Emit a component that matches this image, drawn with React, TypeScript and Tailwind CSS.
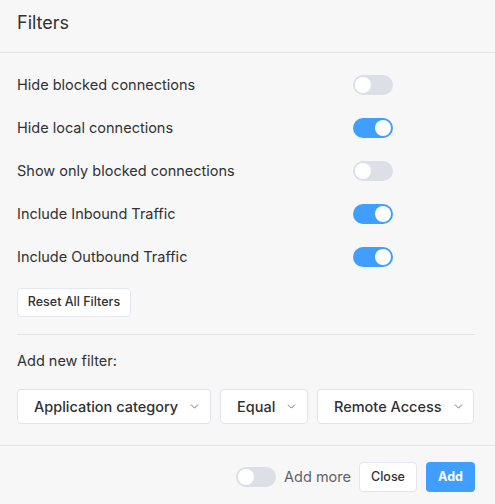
import { ChevronDown } from 'lucide-react'

function Toggle({ on }: { on: boolean }) {
  return (
    <div
      className={`relative w-10 h-5 rounded-full shrink-0 ${on ? 'bg-[#409eff]' : 'bg-[#dcdfe6]'}`}
    >
      <div
        className={`absolute top-[2px] w-4 h-4 rounded-full bg-white ${on ? 'left-[22px]' : 'left-[2px]'}`}
      />
    </div>
  )
}

function Select({ label, width }: { label: string; width: string }) {
  return (
    <div
      className={`${width} h-[35px] bg-white border border-[#e2e4ea] rounded-[4px] flex items-center gap-[10px] pl-[16px] whitespace-nowrap text-[14.5px] font-medium text-[#303133]`}
    >
      <span>{label}</span>
      <ChevronDown size={13} strokeWidth={1.6} className="text-[#606266] shrink-0" />
    </div>
  )
}

const rows = [
  { label: 'Hide blocked connections', on: false },
  { label: 'Hide local connections', on: true },
  { label: 'Show only blocked connections', on: false },
  { label: 'Include Inbound Traffic', on: true },
  { label: 'Include Outbound Traffic', on: true },
]

export default function App() {
  return (
    <div
      className="w-[495px] h-[504px] bg-[#f7f7f7] text-[#303133] overflow-hidden"
      style={{ fontFamily: 'Inter, "Noto Sans", sans-serif' }}
    >
      {/* Header */}
      <div className="h-[53px] border-b border-[#e4e4e4] px-[17px] pt-[11px]">
        <h1 className="text-[18px] leading-6 text-[#303133]">Filters</h1>
      </div>

      {/* Toggles */}
      <div className="px-[17px] pt-[10px]">
        {rows.map(r => (
          <div key={r.label} className="h-[43px] flex items-center">
            <span className="w-[336px] text-[14.5px] text-[#303133]">{r.label}</span>
            <Toggle on={r.on} />
          </div>
        ))}

        <button className="mt-[10px] h-[29px] w-[114px] bg-white border border-[#e4e7ed] rounded-[4px] text-[12.5px] font-medium text-[#303133]">
          Reset All Filters
        </button>

        <div className="mt-[17px] mr-[3px] border-t border-[#e4e4e4]" />

        <p className="mt-[16px] text-[14.5px] leading-5 text-[#303133]">Add new filter:</p>

        <div className="mt-[18px] flex gap-[9px]">
          <Select label="Application category" width="w-[194px]" />
          <Select label="Equal" width="w-[88px]" />
          <Select label="Remote Access" width="w-[157px]" />
        </div>
      </div>

      {/* Footer */}
      <div className="mt-[21px] border-t border-[#e4e4e4] pt-[16px] pr-[20px] flex items-center justify-end">
        <Toggle on={false} />
        <span className="ml-[8px] text-[14.5px] text-[#606266]">Add more</span>
        <button className="ml-[8px] h-[30px] w-[58px] bg-white border border-[#e4e7ed] rounded-[4px] text-[12.5px] font-medium text-[#303133]">
          Close
        </button>
        <button className="ml-[9px] h-[30px] w-[49px] bg-[#409eff] rounded-[4px] text-[12.5px] font-bold text-white">
          Add
        </button>
      </div>
    </div>
  )
}
